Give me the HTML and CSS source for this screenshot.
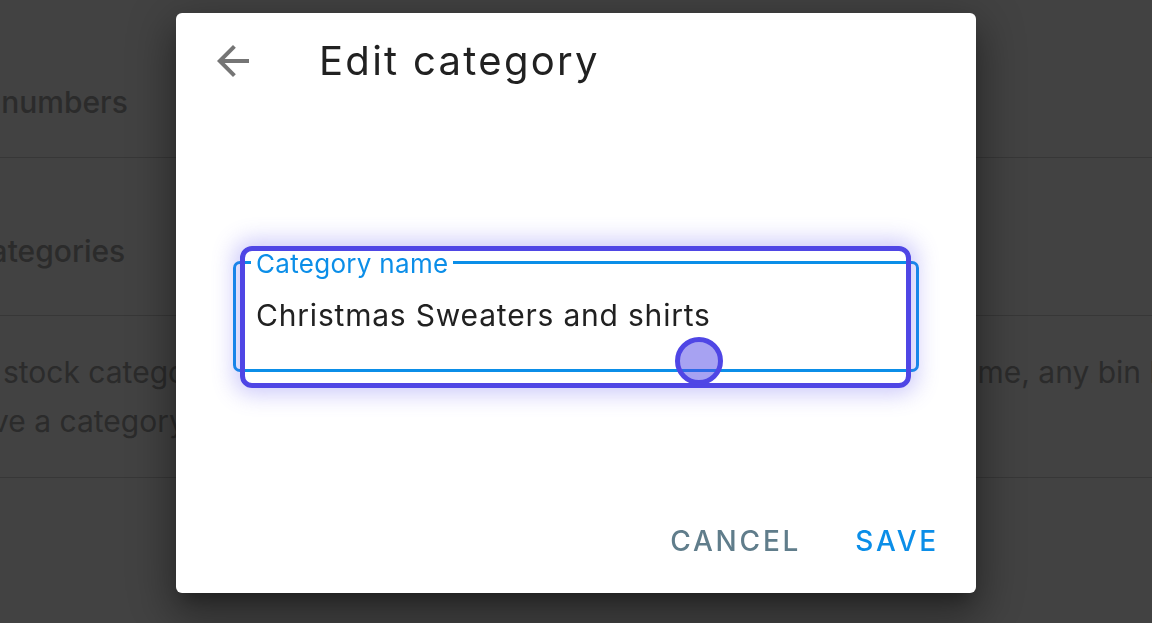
FILE: index.html
```html
<!DOCTYPE html>
<html lang="en">
<head>
<meta charset="utf-8">
<title>Edit category</title>
<link rel="stylesheet" href="styles.css">
</head>
<body>
<main class="page">
  <div class="row row-first"><span class="row-title">Serial numbers</span></div>
  <div class="row row-second"><span class="row-title">Tag categories</span></div>
  <div class="row row-third">
    <p class="row-text"><span class="line">When stock categories are listed here, if you delete a category or fix the name, any bin locations using it</span><span class="line">Remove a category only when no items use it.</span></p>
  </div>
</main>
<div class="backdrop">
  <section class="dialog">
    <header class="dialog-header">
      <button class="icon-btn" aria-label="Back">
        <svg viewBox="0 0 24 24" width="48" height="48"><path d="M20 11H7.83l5.59-5.59L12 4l-8 8 8 8 1.41-1.41L7.83 13H20v-2z"/></svg>
      </button>
      <h2 class="dialog-title">Edit category</h2>
    </header>
    <div class="dialog-body">
      <div class="field">
        <label class="field-label">Category name</label>
        <div class="field-input">Christmas Sweaters and shirts</div>
      </div>
    </div>
    <footer class="dialog-actions">
      <button class="btn btn-cancel">Cancel</button>
      <button class="btn btn-save">Save</button>
    </footer>
    <div class="highlight"><div class="highlight-dot"></div></div>
  </section>
</div>
</body>
</html>
```

FILE: styles.css
```css
* { box-sizing: border-box; }
html, body { margin: 0; padding: 0; }
body {
  width: 1152px;
  height: 623px;
  overflow: hidden;
  background: #424242;
  font-family: Inter, "Noto Sans", sans-serif;
  color: #2b2b2b;
}
.page {
  margin-left: -88px;
  padding-top: 47px;
  width: 1400px;
}
.row {
  border-bottom: 1px solid #373737;
  white-space: nowrap;
}
.row-title {
  font-size: 30px;
  line-height: 40px;
  font-weight: 500;
  display: block;
}
.row-first { padding: 35px 0 35px; }
.row-second { padding: 73px 0 44px; }
.row-third { padding: 32px 0 31px; }
.row-text {
  margin: 0;
  font-size: 30px;
  line-height: 49px;
}
.row-text .line { display: block; }

.backdrop {
  position: fixed;
  inset: 0;
  display: flex;
  justify-content: center;
  align-items: flex-start;
  padding-top: 13px;
}
.dialog {
  position: relative;
  width: 800px;
  height: 580px;
  background: #fff;
  border-radius: 6px;
  display: flex;
  flex-direction: column;
  box-shadow: 0 11px 15px -7px rgba(0,0,0,0.3), 0 24px 38px 3px rgba(0,0,0,0.22), 0 9px 46px 8px rgba(0,0,0,0.2);
}
.dialog-header {
  display: flex;
  align-items: center;
  gap: 62px;
  padding: 24px 0 0 33px;
  height: 72px;
}
.icon-btn {
  width: 48px;
  height: 48px;
  padding: 0;
  border: 0;
  background: none;
  display: flex;
}
.icon-btn svg { fill: #757575; }
.dialog-title {
  margin: 0;
  font-size: 40px;
  line-height: 48px;
  font-weight: 400;
  letter-spacing: 2.3px;
  color: #212121;
}
.dialog-body {
  flex: 1;
  padding: 176px 57px 0;
}
.field {
  position: relative;
  border: 3px solid #0b8ee8;
  border-radius: 7px;
  padding: 34px 20px 37px;
}
.field-label {
  position: absolute;
  top: -13px;
  left: 15px;
  padding: 0 5px;
  background: #fff;
  color: #0b8ee8;
  font-size: 26px;
  line-height: 26px;
  letter-spacing: 0.3px;
}
.field-input {
  font-size: 30px;
  line-height: 34px;
  letter-spacing: 0.8px;
  color: #212121;
}
.dialog-actions {
  display: flex;
  justify-content: flex-end;
  gap: 54px;
  padding: 0 37px 32px 0;
}
.btn {
  border: 0;
  background: none;
  padding: 0;
  font-family: inherit;
  font-size: 28px;
  line-height: 40px;
  font-weight: 500;
  letter-spacing: 0.1em;
  text-transform: uppercase;
}
.btn-cancel { color: #607d8b; }
.btn-save { color: #0b8ee8; }

.highlight {
  position: absolute;
  left: 64px;
  top: 233px;
  width: 671px;
  height: 142px;
  border: 5px solid #4f46e5;
  border-radius: 12px;
  box-shadow: 0 0 22px 6px rgba(99, 90, 240, 0.32);
}
.highlight-dot {
  position: absolute;
  left: 430px;
  top: 86px;
  width: 48px;
  height: 48px;
  border-radius: 50%;
  border: 5px solid #4f46e5;
  background: rgba(79, 70, 229, 0.5);
}
```
